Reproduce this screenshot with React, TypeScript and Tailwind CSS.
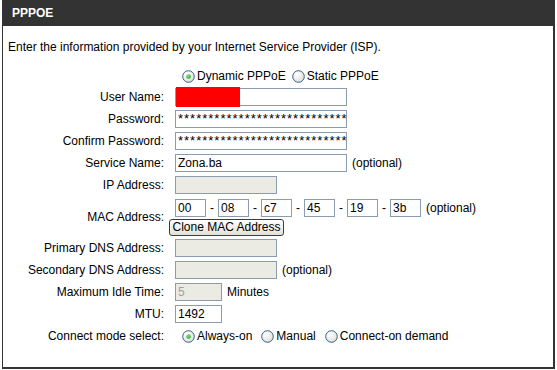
import type { ReactNode } from 'react';

function Radio({ checked }: { checked?: boolean }) {
  return (
    <svg width="13" height="13" viewBox="0 0 13 13" className="shrink-0">
      <defs>
        <radialGradient id="rg" cx="0.35" cy="0.3" r="0.8">
          <stop offset="0" stopColor="#ffffff" />
          <stop offset="1" stopColor="#dcdcd6" />
        </radialGradient>
        <radialGradient id="dot" cx="0.4" cy="0.35" r="0.7">
          <stop offset="0" stopColor="#8fe38a" />
          <stop offset="1" stopColor="#21a121" />
        </radialGradient>
      </defs>
      <circle cx="6.5" cy="6.5" r="5.8" fill="url(#rg)" stroke="#1c5180" strokeWidth="0.9" />
      {checked && <circle cx="6.5" cy="6.5" r="2.3" fill="url(#dot)" />}
    </svg>
  );
}

function RadioItem({ checked, label }: { checked?: boolean; label: string }) {
  return (
    <span className="flex items-center gap-[2px]">
      <Radio checked={checked} />
      <span>{label}</span>
    </span>
  );
}

function Box({ w, disabled, children }: { w: string; disabled?: boolean; children?: ReactNode }) {
  return (
    <div
      className={`${w} h-[18px] border border-[#8a9cae] pl-[2px] leading-[16px] overflow-hidden whitespace-nowrap ${
        disabled ? 'bg-[#ebebe4] text-[#a0a0a0]' : 'bg-white'
      }`}
    >
      {children}
    </div>
  );
}

function Row({ label, children, h = 'h-[22px]' }: { label: string; children: ReactNode; h?: string }) {
  return (
    <div className={`flex items-center ${h}`}>
      <div className="w-[161px] text-right shrink-0">{label}</div>
      <div className="ml-[11px] flex items-center">{children}</div>
    </div>
  );
}

const stars = '*'.repeat(28);

export default function App() {
  const mac = ['00', '08', 'c7', '45', '19', '3b'];

  return (
    <div className="w-[557px] h-[370px] bg-white text-black text-[12px] font-['Liberation_Sans',Arial,sans-serif]">
      <div className="ml-[2px] w-[553px] h-[369px] border-l border-r-2 border-b-2 border-[#333]">
        <div className="h-[26px] bg-[#333] pl-[9px] flex items-center">
          <span className="text-white font-bold text-[12px]">PPPOE</span>
        </div>

        <div className="pl-[5px] mt-[12px] h-[18px] leading-[18px]">
          Enter the information provided by your Internet Service Provider (ISP).
        </div>

        <div className="mt-[10px]">
          <div className="flex items-center h-[20px] pl-[179px] gap-[6px]">
            <RadioItem checked label="Dynamic PPPoE" />
            <RadioItem label="Static PPPoE" />
          </div>

          <Row label="User Name:">
            <div className="relative">
              <Box w="w-[172px]" />
              <div className="absolute left-[1px] -top-px -bottom-px w-[64px] bg-[#ff0000]" />
            </div>
          </Row>
          <Row label="Password:">
            <Box w="w-[172px]">
              <span className="text-[13px] tracking-[1px]">{stars}</span>
            </Box>
          </Row>
          <Row label="Confirm Password:">
            <Box w="w-[172px]">
              <span className="text-[13px] tracking-[1px]">{stars}</span>
            </Box>
          </Row>
          <Row label="Service Name:">
            <Box w="w-[172px]">Zona.ba</Box>
            <span className="ml-[5px]">(optional)</span>
          </Row>
          <Row label="IP Address:">
            <Box w="w-[102px]" disabled />
          </Row>

          <Row label="MAC Address:" h="h-[41px]">
            <div className="flex flex-col">
              <div className="flex items-center mt-[1px]">
                {mac.map((m, i) => (
                  <div key={m + i} className="flex items-center">
                    <Box w="w-[31px]">{m}</Box>
                    {i < mac.length - 1 && <span className="w-[12px] text-center">-</span>}
                  </div>
                ))}
                <span className="ml-[5px]">(optional)</span>
              </div>
              <button className="mt-[2px] -ml-[6px] w-[115px] h-[17px] rounded-[3px] border border-[#3c3c3c] bg-gradient-to-b from-white to-[#e3e1d8] text-[12px] leading-[15px] text-black">
                Clone MAC Address
              </button>
            </div>
          </Row>

          <Row label="Primary DNS Address:">
            <Box w="w-[102px]" disabled />
          </Row>
          <Row label="Secondary DNS Address:">
            <Box w="w-[102px]" disabled />
            <span className="ml-[5px]">(optional)</span>
          </Row>
          <Row label="Maximum Idle Time:">
            <Box w="w-[47px]" disabled>
              5
            </Box>
            <span className="ml-[5px]">Minutes</span>
          </Row>
          <Row label="MTU:">
            <Box w="w-[47px]">1492</Box>
          </Row>
          <Row label="Connect mode select:">
            <div className="flex items-center pl-[7px] gap-[9px]">
              <RadioItem checked label="Always-on" />
              <RadioItem label="Manual" />
              <RadioItem label="Connect-on demand" />
            </div>
          </Row>
        </div>
      </div>
    </div>
  );
}
